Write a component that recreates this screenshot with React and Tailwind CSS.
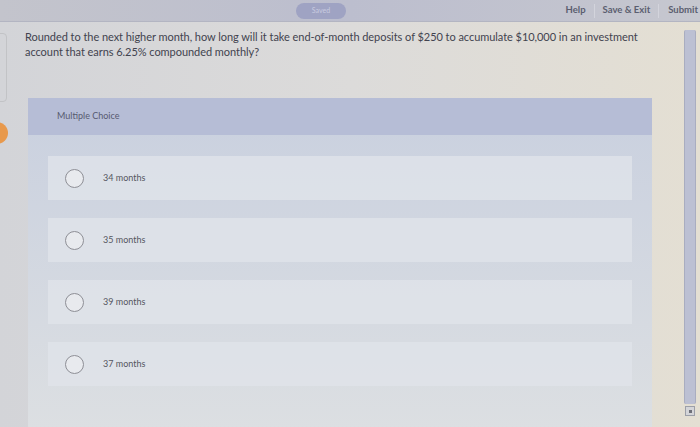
export default function App() {
  const options = ["34 months", "35 months", "39 months", "37 months"];
  return (
    <div className="relative w-[700px] h-[427px] overflow-hidden bg-gradient-to-r from-[#d3d4d8] via-[#dcdbda] to-[#e4dfd3] font-['Lato','Noto_Sans',sans-serif]">
      {/* top bar */}
      <div className="flex items-center h-[22px] bg-gradient-to-r from-[#c3c4cc] via-[#bcbece] to-[#c6c7cf] border-b border-[#b3b5c2]">
        <div className="w-[296px]" />
        <div className="w-[50px] h-[16px] rounded-full bg-[#9fa3c3] flex items-center justify-center text-[7px] text-[#c9cbe0]">
          Saved
        </div>
        <div className="flex-1" />
        <div className="flex items-center text-[9.5px] font-bold text-[#5b5e70]">
          <span className="px-[8px]">Help</span>
          <span className="w-px h-[14px] bg-[#d3d4dc]" />
          <span className="px-[8px]">Save &amp; Exit</span>
          <span className="w-px h-[14px] bg-[#d3d4dc]" />
          <span className="pl-[9px] pr-[2px]">Submit</span>
        </div>
      </div>

      <div className="flex h-[405px]">
        {/* left edge */}
        <div className="relative w-[28px] shrink-0">
          <div className="mt-[11px] ml-[-10px] w-[17px] h-[69px] rounded-[4px] border border-[#c2c3c6]" />
          <div className="absolute left-[-14px] top-[100px] w-[22px] h-[22px] rounded-full bg-[#e8994c]" />
        </div>

        {/* content */}
        <div className="w-[628px] shrink-0">
          <p className="mt-[7px] ml-[-3px] text-[11px] leading-[15px] text-[#42434f] tracking-[-0.05px] whitespace-nowrap">
            Rounded to the next higher month, how long will it take end-of-month deposits of $250 to accumulate $10,000 in an investment
            <br />
            account that earns 6.25% compounded monthly?
          </p>

          <div className="mt-[39px] w-[624px] h-[330px] bg-gradient-to-b from-[#c9d0df] to-[#dcdfe2]">
            <div className="h-[37px] bg-[#b6bdd6] pl-[29px] pt-[11px] text-[9px] text-[#565a70]">
              Multiple Choice
            </div>
            <div className="flex flex-col gap-[18px] pt-[21px] pl-[20px] pr-[20px]">
              {options.map((o) => (
                <div
                  key={o}
                  className="flex items-center h-[44px] bg-[#e0e4ea]/80"
                >
                  <div className="ml-[17px] w-[19px] h-[19px] rounded-full border-[1.5px] border-[#8e8f96] bg-[#e8eaee]" />
                  <span className="ml-[19px] text-[9px] text-[#55565f]">{o}</span>
                </div>
              ))}
            </div>
          </div>
        </div>

        {/* right side with scrollbar */}
        <div className="flex-1 flex justify-end">
          <div className="mt-[8px] mr-[4px] w-[12px] h-[386px] flex flex-col items-center">
            <div className="w-[12px] flex-1 bg-[#bcc0d3] border-x border-[#a9adc0] rounded-[2px]" />
            <div className="mt-[2px] w-[10px] h-[10px] border border-[#9c9fa8] bg-[#d4d5d9] flex items-center justify-center">
              <div className="w-[3px] h-[3px] bg-[#6d6f78]" />
            </div>
          </div>
        </div>
      </div>
    </div>
  );
}
